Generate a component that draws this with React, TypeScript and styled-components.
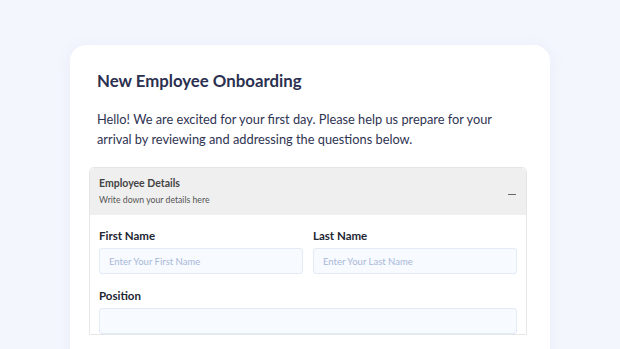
import React from 'react';
import styled, { createGlobalStyle } from 'styled-components';

const GlobalStyle = createGlobalStyle`
  html, body {
    margin: 0;
    padding: 0;
    background: #f4f6fd;
    font-family: Lato, "Noto Sans", sans-serif;
    overflow: hidden;
  }
`;

const Page = styled.div`
  width: 620px;
  height: 349px;
  padding-top: 45px;
  box-sizing: border-box;
  display: flex;
  justify-content: center;
  overflow: hidden;
`;

const Card = styled.div`
  width: 480px;
  height: 360px;
  box-sizing: border-box;
  background: #ffffff;
  border-radius: 16px;
  padding: 26px 23px 0 19px;
  box-shadow: 0 2px 14px rgba(200, 210, 240, 0.25);
`;

const Title = styled.h1`
  margin: 0 0 0 8px;
  font-size: 16.8px;
  font-weight: 700;
  color: #2b3050;
  line-height: 20px;
`;

const Intro = styled.p`
  margin: 19px 0 0 8px;
  font-size: 12.8px;
  line-height: 19.5px;
  color: #2f3452;
`;

const Accordion = styled.section`
  margin-top: 18px;
  border: 1px solid #e6e6e6;
  border-radius: 5px 5px 0 0;
`;

const Header = styled.div`
  display: flex;
  align-items: center;
  justify-content: space-between;
  background: #efefef;
  height: 47px;
  padding: 0 10px 0 9px;
  border-radius: 5px 5px 0 0;
`;

const HeaderText = styled.div`
  display: flex;
  flex-direction: column;
  gap: 5px;
  margin-top: -2px;
`;

const HeaderTitle = styled.span`
  font-size: 10.5px;
  font-weight: 700;
  color: #444444;
`;

const HeaderSub = styled.span`
  font-size: 8.7px;
  color: #555555;
`;

const Minus = styled.span`
  width: 8px;
  height: 1.5px;
  background: #666666;
  margin-top: 6px;
`;

const Body = styled.div`
  padding: 14px 9px 0 9px;
  display: flex;
  flex-direction: column;
  gap: 15px;
`;

const Row = styled.div`
  display: grid;
  grid-template-columns: 1fr 1fr;
  gap: 10px;
`;

const Field = styled.label`
  display: flex;
  flex-direction: column;
  gap: 5px;
`;

const Label = styled.span`
  font-size: 11.5px;
  font-weight: 700;
  color: #222633;
  line-height: 14px;
`;

const Input = styled.input`
  height: 26px;
  box-sizing: border-box;
  border: 1px solid #e3ebf7;
  border-radius: 3px;
  background: #f7faff;
  padding: 0 9px;
  font-family: inherit;
  font-size: 9.5px;
  outline: none;
  &::placeholder {
    color: #a9b8d8;
  }
`;

export default function App() {
  return (
    <Page>
      <GlobalStyle />
      <Card>
        <Title>New Employee Onboarding</Title>
        <Intro>
          Hello! We are excited for your first day. Please help us prepare for your
          <br />
          arrival by reviewing and addressing the questions below.
        </Intro>
        <Accordion>
          <Header>
            <HeaderText>
              <HeaderTitle>Employee Details</HeaderTitle>
              <HeaderSub>Write down your details here</HeaderSub>
            </HeaderText>
            <Minus />
          </Header>
          <Body>
            <Row>
              <Field>
                <Label>First Name</Label>
                <Input placeholder="Enter Your First Name" />
              </Field>
              <Field>
                <Label>Last Name</Label>
                <Input placeholder="Enter Your Last Name" />
              </Field>
            </Row>
            <Field>
              <Label>Position</Label>
              <Input />
            </Field>
          </Body>
        </Accordion>
      </Card>
    </Page>
  );
}
